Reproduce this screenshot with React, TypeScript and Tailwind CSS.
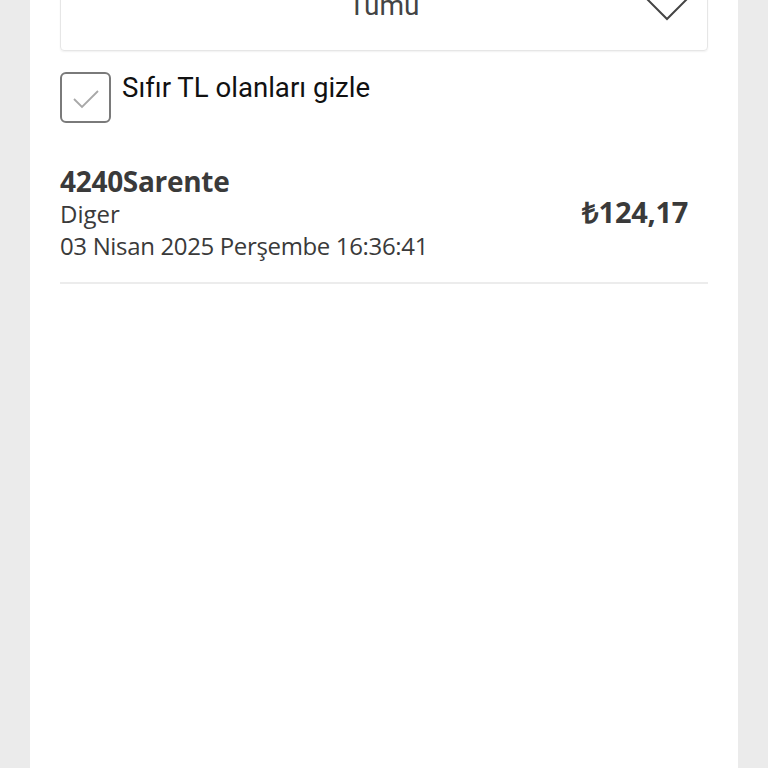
import React from 'react';

export default function App() {
  return (
    <div className="w-[768px] h-[768px] overflow-hidden bg-[#ebebeb] flex justify-center">
      <div className="w-[708px] h-full bg-white px-[30px] flex flex-col">
        {/* Dropdown (scrolled partly off the top) */}
        <div className="-mt-[50px] h-[101px] rounded-[4px] border border-[#e6e6e6] shadow-[0_1px_2px_rgba(0,0,0,0.06)] relative flex items-center justify-center">
          <span className="text-[28px] text-[#444] font-['Roboto',sans-serif] font-normal leading-none mt-[10px]">Tumu</span>
          <svg className="absolute right-[14px] top-[30px]" width="52" height="42" viewBox="0 0 52 42" fill="none">
            <path d="M2 14 L26 38 L50 14" stroke="#444" strokeWidth="2" strokeLinejoin="miter" />
          </svg>
        </div>

        {/* Checkbox */}
        <div className="mt-[21px] flex items-start gap-[11px]">
          <div className="w-[51px] h-[51px] rounded-[6px] border-2 border-[#7a7a7a] flex items-center justify-center shrink-0">
            <svg width="30" height="22" viewBox="0 0 30 22" fill="none" className="mt-[2px]">
              <path d="M3 11 L11 19 L27 3" stroke="#a8a8a8" strokeWidth="1.8" />
            </svg>
          </div>
          <span className="text-[27.6px] leading-[34px] text-[#111] font-['Roboto',sans-serif] mt-[-1px]">Sıfır TL olanları gizle</span>
        </div>

        {/* Item */}
        <div className="mt-[41px] pb-[20px] border-b-2 border-[#ececec] flex items-center justify-between font-['Open_Sans',sans-serif] text-[#3a3a3a]">
          <div className="flex flex-col">
            <span className="text-[28px] leading-[34px] font-bold tracking-[-0.3px]">4240Sarente</span>
            <span className="text-[24px] leading-[32px]">Diger</span>
            <span className="text-[24px] leading-[32px] tracking-[-0.35px]">03 Nisan 2025 Perşembe 16:36:41</span>
          </div>
          <span className="text-[29px] font-bold mr-[20px] -mt-[2px] tracking-[-0.3px]">₺124,17</span>
        </div>
      </div>
    </div>
  );
}
